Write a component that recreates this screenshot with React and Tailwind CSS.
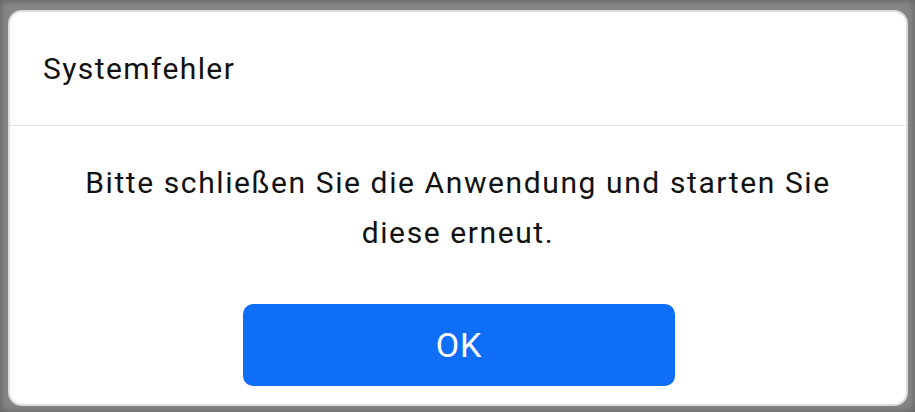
import React from 'react';

// System error dialog, centred over a dimmed backdrop

const font = { fontFamily: 'Roboto, "Noto Sans", sans-serif' };

const ErrorDialog = () => (
  <div className="w-[900px] h-[396px] flex flex-col bg-white rounded-[14px] border-2 border-[#dcdcdc] overflow-hidden">
    <div className="h-[114px] flex items-center pl-[33px] border-b border-[#dedede]">
      <h1 className="text-[30px] leading-none text-[#111] tracking-[1.4px]">Systemfehler</h1>
    </div>
    <div className="flex-1 flex flex-col items-center px-[60px] pt-[32px]">
      <p className="text-[30px] leading-[50px] text-[#111] text-center tracking-[1.6px]">
        Bitte schließen Sie die Anwendung und starten Sie diese erneut.
      </p>
      <button className="mt-[46px] ml-[2px] w-[432px] h-[82px] rounded-[10px] bg-[#0f6ef8] text-white text-[34px] tracking-[1px]">
        OK
      </button>
    </div>
  </div>
);

export default function App() {
  return (
    <div
      className="w-[915px] h-[412px] pl-[8px] pt-[10px] bg-[#878787] shadow-[inset_0_0_8px_rgba(0,0,0,0.35)]"
      style={font}
    >
      <ErrorDialog />
    </div>
  );
}
